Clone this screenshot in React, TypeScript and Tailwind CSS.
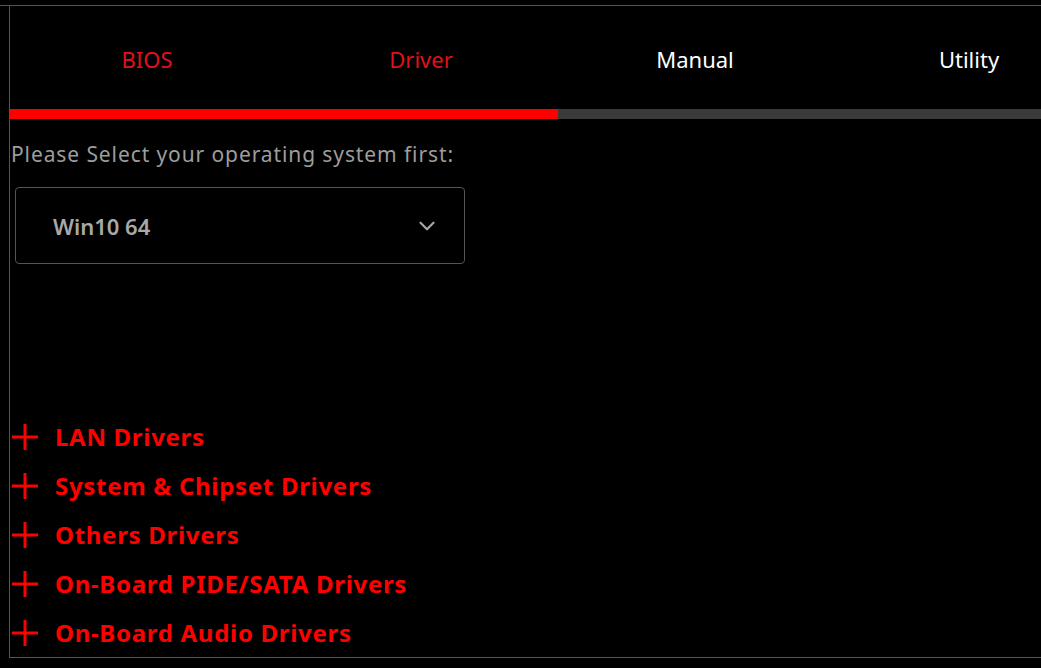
import { ChevronDown } from 'lucide-react';

const tabs = [
  { label: 'BIOS', color: 'text-[#e3101b]' },
  { label: 'Driver', color: 'text-[#e3101b]' },
  { label: 'Manual', color: 'text-white' },
  { label: 'Utility', color: 'text-white' },
];

const drivers = [
  'LAN Drivers',
  'System & Chipset Drivers',
  'Others Drivers',
  'On-Board PIDE/SATA Drivers',
  'On-Board Audio Drivers',
];

function Plus() {
  return (
    <svg width="28" height="28" viewBox="0 0 28 28" className="shrink-0">
      <path d="M14 1v26M1 14h26" stroke="#ff0000" strokeWidth="3" />
    </svg>
  );
}

export default function App() {
  return (
    <div
      className="h-[668px] w-[1041px] overflow-hidden bg-black pt-[5px]"
      style={{ fontFamily: '"Noto Sans", "Liberation Sans", sans-serif' }}
    >
      <div className="border-t border-[#555]">
        <div className="ml-[9px] h-[652px] border-b border-l border-[#555]">
          <div className="flex w-[1096px]">
            {tabs.map((t) => (
              <div
                key={t.label}
                className={`flex h-[103px] w-[274px] shrink-0 items-center justify-center pt-[2px] text-[22px] leading-7 ${t.color}`}
              >
                {t.label}
              </div>
            ))}
          </div>
          <div className="flex h-[10px]">
            <div className="w-[548px] bg-[#ff0000]" />
            <div className="flex-1 bg-[#3a3a3a]" />
          </div>
          <p className="mt-[23px] ml-[1px] text-[21px] leading-6 tracking-[0.9px] text-[#9d9d9d]">
            Please Select your operating system first:
          </p>
          <div className="mt-[21px] ml-[5px] flex h-[77px] w-[450px] items-center justify-between rounded-[4px] border border-[#555] pr-[24px] pl-[37px]">
            <span className="text-[22px] leading-7 font-semibold text-[#a8a8a8]">Win10 64</span>
            <ChevronDown className="h-[26px] w-[26px] text-[#a8a8a8]" strokeWidth={2} />
          </div>
          <div className="mt-[159px] flex flex-col gap-[21px]">
            {drivers.map((d) => (
              <div key={d} className="flex h-[28px] items-center gap-[16px] pl-[1px]">
                <Plus />
                <span className="text-[24px] leading-7 font-bold tracking-[0.7px] text-[#ff0000]">{d}</span>
              </div>
            ))}
          </div>
        </div>
      </div>
    </div>
  );
}
